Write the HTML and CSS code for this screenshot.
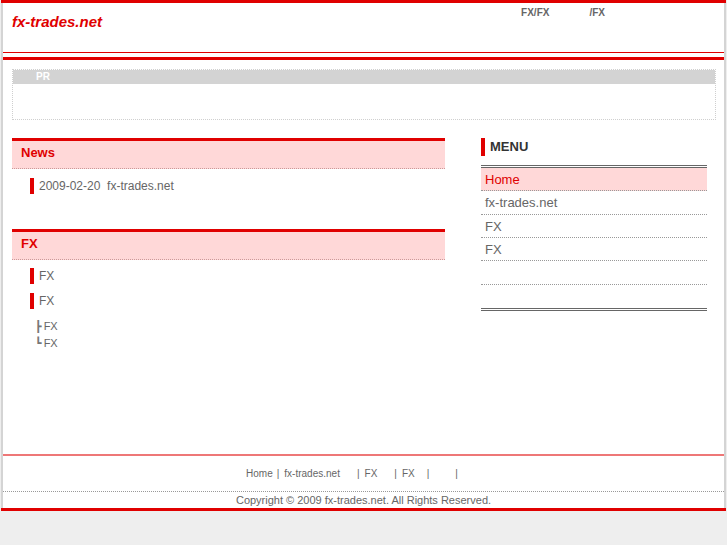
FILE: index.html
```
<!DOCTYPE html>
<html lang="ja">
<head>
<meta charset="utf-8">
<title>fx-trades.net</title>
<link rel="stylesheet" href="styles.css">
</head>
<body>
<div class="page">
  <div class="inner">
    <header class="header">
      <h1 class="logo">fx-trades.net</h1>
      <div class="toplinks"><span>FX/FX</span><span class="toplink-2">/FX</span></div>
    </header>
    <div class="rule"></div>

    <div class="pr">
      <div class="pr-head">PR</div>
      <div class="pr-body"></div>
    </div>

    <div class="main">
      <div class="left">
        <section class="sec">
          <h2 class="sec-title">News</h2>
          <ul class="news">
            <li>2009-02-20&nbsp;&nbsp;fx-trades.net</li>
          </ul>
        </section>
        <section class="sec sec-fx">
          <h2 class="sec-title">FX</h2>
          <ul class="items">
            <li>FX</li>
            <li>FX</li>
          </ul>
          <div class="sub">
            <div><span class="tree">┣</span>FX</div>
            <div><span class="tree">┗</span>FX</div>
          </div>
        </section>
      </div>
      <aside class="right">
        <h3 class="menu-title">MENU</h3>
        <ul class="menu">
          <li class="active">Home</li>
          <li>fx-trades.net</li>
          <li>FX</li>
          <li>FX</li>
          <li></li>
          <li></li>
        </ul>
      </aside>
    </div>

    <footer class="footer">
      <nav class="foot-nav">
        <span class="fl">Home</span><span class="sep">|</span><span class="fl pad-13">fx-trades.net</span><span class="sep">|</span><span class="fl pad-13">FX</span><span class="sep">|</span><span class="fl pad-8">FX</span><span class="sep">|</span><span class="fl blank"></span><span class="sep">|</span>
      </nav>
      <p class="copy">Copyright &copy; 2009 fx-trades.net. All Rights Reserved.</p>
    </footer>
  </div>
</div>
</body>
</html>
```
FILE: styles.css
```
* { box-sizing: border-box; }
html, body { margin: 0; padding: 0; }
body {
  background: #eeeeee;
  font-family: "Liberation Sans", Arial, sans-serif;
  color: #666;
}
ul { list-style: none; margin: 0; padding: 0; }
h1, h2, h3, p { margin: 0; }

.page {
  width: 725px;
  margin-left: 1px;
  background: #fff;
  border-top: 3px solid #e00000;
  border-bottom: 3px solid #e00000;
}
.inner {
  border-left: 2px solid #d4d4d4;
  border-right: 2px solid #d4d4d4;
}

.header {
  height: 50px;
  border-bottom: 1px solid #e00000;
  display: flex;
  align-items: flex-start;
}
.logo {
  margin: 10px 0 0 9px;
  font-size: 15px;
  line-height: 18px;
  font-weight: bold;
  font-style: italic;
  color: #e00000;
}
.toplinks {
  margin: 4px 0 0 auto;
  padding-right: 119px;
  font-size: 10px;
  line-height: 12px;
  font-weight: bold;
  color: #666;
}
.toplink-2 { margin-left: 40px; }

.rule {
  margin-top: 4px;
  height: 3px;
  background: #e00000;
}

.pr {
  margin: 9px 8px 0 9px;
  border: 1px dotted #cfcfcf;
}
.pr-head {
  height: 14px;
  line-height: 14px;
  background: #d3d3d3;
  color: #fff;
  font-size: 10px;
  font-weight: bold;
  padding-left: 23px;
}
.pr-body { height: 35px; }

.main {
  display: flex;
  align-items: flex-start;
  min-height: 334px;
}
.left {
  width: 433px;
  margin-left: 9px;
}
.right {
  width: 226px;
  margin-left: 36px;
  margin-top: 18px;
}

.sec { margin-top: 18px; }
.sec-fx { margin-top: 35px; }
.sec-title {
  border-top: 3px solid #e00000;
  border-bottom: 1px dotted #c99;
  background: #ffd8d8;
  height: 31px;
  line-height: 24px;
  padding-left: 9px;
  font-size: 13px;
  font-weight: bold;
  color: #e00000;
}

.news { margin: 9px 0 0 18px; }
.news li {
  border-left: 4px solid #e00000;
  padding-left: 5px;
  font-size: 12px;
  line-height: 16px;
  color: #666;
}

.items { margin: 8px 0 0 18px; }
.items li {
  border-left: 4px solid #e00000;
  padding-left: 5px;
  font-size: 12px;
  line-height: 17px;
  height: 16px;
  margin-bottom: 9px;
  color: #666;
}
.sub {
  margin-left: 23px;
  font-size: 11px;
  line-height: 16px;
  color: #666;
}
.tree {
  font-family: "DejaVu Sans", sans-serif;
  font-size: 11px;
  margin-right: 2px;
  color: #777;
}

.menu-title {
  border-left: 4px solid #e00000;
  padding-left: 5px;
  height: 18px;
  line-height: 18px;
  font-size: 13px;
  font-weight: bold;
  color: #333;
}
.menu {
  margin-top: 9px;
  border-top: 3px double #666;
  border-bottom: 3px double #666;
}
.menu li {
  height: 23.35px;
  line-height: 23px;
  border-bottom: 1px dotted #999;
  padding-left: 4px;
  font-size: 13px;
  color: #666;
}
.menu li:last-child { border-bottom: none; }
.menu li.active {
  background: #ffd8d8;
  color: #e00000;
}

.footer { border-top: 2px solid #ee7777; }
.foot-nav {
  display: flex;
  justify-content: center;
  padding: 11px 18px 10px 0;
  border-bottom: 1px dotted #999;
  font-size: 10px;
  line-height: 14px;
  color: #666;
}
.sep { margin: 0 5px 0 4px; }
.pad-13 { padding-right: 13px; }
.pad-8 { padding-right: 8px; }
.blank { width: 17px; }
.copy {
  padding-top: 1px;
  padding-bottom: 1px;
  text-align: center;
  font-size: 11px;
  line-height: 14px;
  color: #666;
}
```
